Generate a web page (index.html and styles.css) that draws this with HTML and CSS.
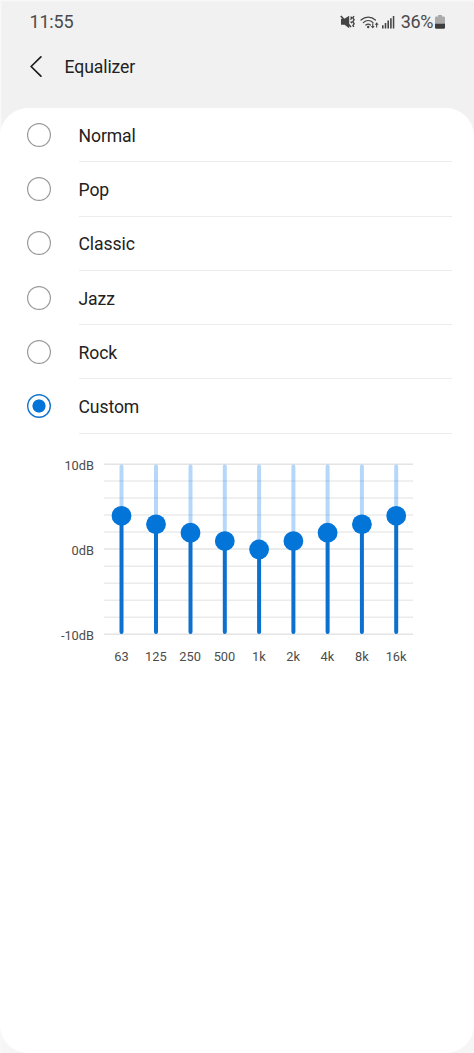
FILE: index.html
```html
<!DOCTYPE html>
<html lang="en">
<head>
<meta charset="utf-8">
<title>Equalizer</title>
<link rel="stylesheet" href="styles.css">
</head>
<body>
<div class="screen">
  <header class="status">
    <span class="clock">11:55</span>
    <svg class="status-icons" width="56" height="20" viewBox="0 0 56 20" fill="#444">
      <path d="M1 5.800h3.400L9.200 2.700v12.600L4.600 11.800H1z"/>
      <path d="M.8 3L11 14" stroke="#444" stroke-width="1.600"/>
      <path d="M10.700 3.600l1 1.300-1.200 1.700M10.700 8.500l1.200 1.700M14 3.200l-1.200 1.600 1.300 1.900-1.300 2 1.300 2-1.200 1.900 1 1.300" fill="none" stroke="#444" stroke-width="1.400"/>
      <path d="M21 7C25.200 3.100 31.200 3.100 35.400 7M23.300 9.600c2.900-2.600 6.900-2.600 9.800 0M25.800 12c1.500-1.200 3.200-1.200 4.700 0" fill="none" stroke="#444" stroke-width="1.200" stroke-linecap="round"/>
      <circle cx="28.200" cy="14" r="1.200"/>
      <path d="M32.200 10.300h1.100v2.700h1.400L32.800 15.500 30.900 13h1.300zM36.100 14.500h1.100v-2.700h1.400L36.700 9.300l-1.900 2.500h1.300z"/>
      <path d="M42 12.300h1.600V15.500H42zM44.700 10h1.600v5.500h-1.600zM47.400 7.500H49v8h-1.600zM50.100 5.200h1.600v10.300h-1.600zM52.800 3h1.500v12.500h-1.500z"/>
    </svg>
    <span class="percent">36%</span>
    <svg class="battery" width="10" height="14" viewBox="0 0 10 14">
      <path d="M3 0h4v1.500h1.800q1.200 0 1.200 1.200V9H0V2.700q0-1.200 1.200-1.200H3z" fill="#aaa"/>
      <path d="M0 8.700h10v3.900q0 1.200-1.200 1.200H1.200Q0 13.800 0 12.600z" fill="#3d3d3d"/>
    </svg>
  </header>
  <div class="titlebar">
    <svg width="13" height="22" viewBox="0 0 13 22" fill="none" stroke="#1c1c1c" stroke-width="1.700" stroke-linecap="round" stroke-linejoin="round"><path d="M10.900 .9L1.100 10.500l9.800 9.700"/></svg>
    <h1 class="title">Equalizer</h1>
  </div>
  <main class="panel">
    <div class="option"><span class="radio"></span><span class="name">Normal</span></div>
    <div class="option"><span class="radio"></span><span class="name">Pop</span></div>
    <div class="option"><span class="radio"></span><span class="name">Classic</span></div>
    <div class="option"><span class="radio"></span><span class="name">Jazz</span></div>
    <div class="option"><span class="radio"></span><span class="name">Rock</span></div>
    <div class="option"><span class="radio selected"></span><span class="name">Custom</span></div>
    <section class="equalizer">
      <div class="levels"><span>10dB</span><span>0dB</span><span>-10dB</span></div>
      <svg class="plot" width="309" height="190" viewBox="0 0 309 190">
        <path d="M0 10.300H309M0 95H309M0 180.200H309" stroke="#e4e4e4" stroke-width="1.500"/>
        <path d="M0 27H309M0 44H309M0 61H309M0 78H309M0 112.200H309M0 129.200H309M0 146.200H309M0 163.200H309" stroke="#ebebeb" stroke-width="1.500"/>
        <path d="M17.500 12.500V62M52 12.500V70M86.500 12.500V79M120.800 12.500V87M155.100 12.500V95M189.400 12.500V87M223.600 12.500V79M257.900 12.500V70M292.200 12.500V62" stroke="#1684ee" stroke-opacity=".32" stroke-width="4" stroke-linecap="round"/>
        <path d="M17.500 62V178M52 70V178M86.500 79V178M120.800 87V178M155.100 95V178M189.400 87V178M223.600 79V178M257.900 70V178M292.200 62V178" stroke="#0b70ce" stroke-width="4" stroke-linecap="round"/>
        <g fill="#0374d8">
          <circle cx="17.500" cy="61.800" r="9.900"/><circle cx="52" cy="70.300" r="9.900"/><circle cx="86.500" cy="78.700" r="9.900"/>
          <circle cx="120.800" cy="87.100" r="9.900"/><circle cx="155.100" cy="95.400" r="9.900"/><circle cx="189.400" cy="87.100" r="9.900"/>
          <circle cx="223.600" cy="78.700" r="9.900"/><circle cx="257.900" cy="70.300" r="9.900"/><circle cx="292.200" cy="61.800" r="9.900"/>
        </g>
      </svg>
      <div class="bands"><span>63</span><span>125</span><span>250</span><span>500</span><span>1k</span><span>2k</span><span>4k</span><span>8k</span><span>16k</span></div>
    </section>
  </main>
</div>
</body>
</html>
```
FILE: styles.css
```css
* { box-sizing: border-box; }
body { margin: 0; font-family: Roboto, "Liberation Sans", sans-serif; color: #222; }
.screen {
  width: 474px;
  height: 1053px;
  display: flex;
  flex-direction: column;
  background: linear-gradient(#f1f1f1 50%, #f6f6f6 50%);
  box-shadow: inset 1.5px 1.5px 0 #f8f8f8;
  overflow: hidden;
}
.status {
  height: 44px;
  padding: 0 29px 2px 29.500px;
  display: flex;
  align-items: center;
  color: #4a4a4a;
  font-size: 18px;
}
.clock { margin-right: auto; letter-spacing: -.2px; }
.status-icons { margin: 4px 5px 0 0; }
.percent { letter-spacing: -.4px; }
.battery { margin: 1px 0 0 2px; }
.titlebar {
  height: 64px;
  padding: 0 0 18px 29.500px;
  display: flex;
  align-items: center;
  gap: 22px;
}
.title { margin: 0; font-size: 17.600px; font-weight: 400; line-height: 24px; letter-spacing: -.1px; }
.panel { flex: 1; background: #fff; border-radius: 28px; }
.option {
  height: 54.300px;
  display: flex;
  align-items: center;
  padding: 0 22px 0 27px;
}
.radio {
  width: 24px;
  height: 24px;
  box-shadow: inset 0 0 0 1.200px #999;
  border-radius: 50%;
  margin: -1px 27.500px 0 0;
}
.radio.selected {
  box-shadow: inset 0 0 0 1.400px #1474cf;
  background: radial-gradient(circle, #0374d8 6.200px, transparent 6.900px);
}
.name {
  flex: 1;
  align-self: stretch;
  display: flex;
  align-items: center;
  padding-top: 2px;
  border-bottom: 1.300px solid #ededed;
  font-size: 17.600px;
  letter-spacing: -.1px;
}
.equalizer {
  display: grid;
  grid-template-columns: 94px 309px;
  column-gap: 10.300px;
  padding-top: 20.200px;
  color: #4c4c4c;
  font-size: 12.800px;
}
.levels {
  height: 191px;
  margin-bottom: -1px;
  display: flex;
  flex-direction: column;
  justify-content: space-between;
  align-items: flex-end;
  line-height: 18px;
  padding-top: 3px;
}
.bands {
  grid-column: 2;
  display: grid;
  grid-template-columns: repeat(9, 1fr);
  text-align: center;
  line-height: 18px;
  padding-top: 4px;
}
```
